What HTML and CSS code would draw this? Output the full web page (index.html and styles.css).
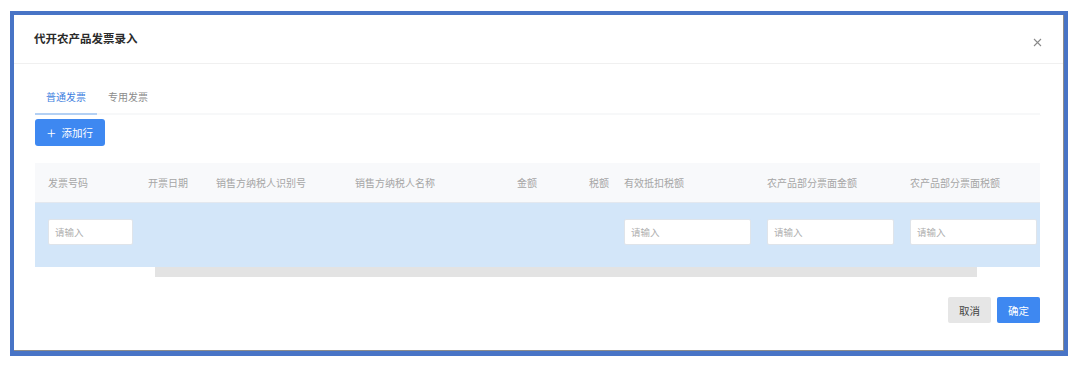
FILE: index.html
```html
<!DOCTYPE html>
<html lang="zh-CN">
<head>
<meta charset="utf-8">
<title>代开农产品发票录入</title>
<link rel="stylesheet" href="styles.css">
</head>
<body>
<div class="frame">
  <div class="dialog">
    <div class="dlg-header">
      <span class="dlg-title">代开农产品发票录入</span>
      <span class="dlg-close">
        <svg width="9" height="9" viewBox="0 0 9 9"><path d="M1 1 L8 8 M8 1 L1 8" stroke="#8a8a8a" stroke-width="1.1" fill="none"/></svg>
      </span>
    </div>
    <div class="dlg-body">
      <div class="tabs">
        <div class="tab active">普通发票</div>
        <div class="tab">专用发票</div>
      </div>
      <button class="btn-add"><span class="plus">+</span>添加行</button>
      <div class="table">
        <div class="thead">
          <div class="th">发票号码</div>
          <div class="th">开票日期</div>
          <div class="th">销售方纳税人识别号</div>
          <div class="th">销售方纳税人名称</div>
          <div class="th">金额</div>
          <div class="th">税额</div>
          <div class="th">有效抵扣税额</div>
          <div class="th">农产品部分票面金额</div>
          <div class="th">农产品部分票面税额</div>
        </div>
        <div class="trow">
          <div class="td"><div class="input narrow">请输入</div></div>
          <div class="td"></div>
          <div class="td"></div>
          <div class="td"></div>
          <div class="td"></div>
          <div class="td"></div>
          <div class="td"><div class="input">请输入</div></div>
          <div class="td"><div class="input">请输入</div></div>
          <div class="td"><div class="input">请输入</div></div>
        </div>
        <div class="scrollbar"></div>
      </div>
      <div class="dlg-footer">
        <button class="btn btn-cancel">取消</button>
        <button class="btn btn-ok">确定</button>
      </div>
    </div>
  </div>
</div>
</body>
</html>
```

FILE: styles.css
```css
* { box-sizing: border-box; }
html, body { margin: 0; padding: 0; background: #ffffff; }
body {
  font-family: "Noto Sans CJK SC", "Noto Sans", "Liberation Sans", sans-serif;
  color: #333;
}
.frame {
  margin: 11px 0 0 10px;
  width: 1058px;
  height: 345px;
  border-style: solid;
  border-color: #4874c6;
  border-width: 4px 4px 5px 4px;
  background: #fff;
}
.dialog {
  height: 100%;
  border-right: 1px solid #8c8c8c;
  border-bottom: 1px solid #8c8c8c;
  background: #fff;
}
.dlg-header {
  height: 49px;
  padding: 0 21px 0 20px;
  display: flex;
  align-items: center;
  justify-content: space-between;
  border-bottom: 1px solid #f0f0f0;
}
.dlg-title {
  font-size: 11.5px;
  font-weight: 700;
  color: #2b2b2b;
  margin-top: -2px;
}
.dlg-close {
  display: flex;
  align-items: center;
  margin-top: 7px;
}
.dlg-body {
  padding: 0 23px 0 21px;
}
.tabs {
  display: flex;
  padding-top: 17px;
  border-bottom: 2px solid #f7f8f9;
}
.tab {
  font-size: 10px;
  line-height: 32px;
  padding: 0 11px;
  color: #8c8c8c;
  margin-bottom: -2px;
  border-bottom: 2px solid transparent;
}
.tab.active {
  color: #3f7fe0;
  border-bottom-color: #b3d0f4;
}
.btn-add {
  margin-top: 4px;
  width: 70px;
  height: 27px;
  border: none;
  border-radius: 3px;
  background: #3e88f1;
  color: #fff;
  font-family: inherit;
  font-size: 10.5px;
  display: flex;
  align-items: center;
  justify-content: center;
  padding: 0;
}
.btn-add .plus {
  font-size: 16px;
  font-weight: 300;
  margin-right: 6px;
  line-height: 1;
  margin-top: -2px;
}
.table {
  margin-top: 17px;
  width: 1005px;
}
.thead, .trow {
  display: grid;
  grid-template-columns: 100px 68px 139px 162px 72px 35px 143px 143px 143px;
}
.thead {
  height: 40px;
  background: #f8f9fb;
  border-bottom: 1px solid #e3e8ef;
  align-items: center;
}
.th {
  font-size: 10px;
  color: #a6a6a6;
  padding-left: 13px;
  white-space: nowrap;
}
.trow {
  height: 64px;
  background: #d3e6f9;
  align-items: start;
}
.td {
  padding: 16px 3px 0 13px;
}
.input {
  height: 26px;
  width: 127px;
  background: #fff;
  border: 1px solid #dfe4ea;
  border-radius: 2px;
  font-size: 9.5px;
  line-height: 24px;
  color: #b0b0b0;
  padding-left: 6px;
}
.input.narrow { width: 85px; }
.scrollbar {
  margin-left: 120px;
  width: 822px;
  height: 10px;
  background: #e3e3e3;
}
.dlg-footer {
  margin-top: 20px;
  display: flex;
  justify-content: flex-end;
  gap: 6px;
}
.btn {
  width: 43px;
  height: 26px;
  border: none;
  border-radius: 2px;
  font-family: inherit;
  font-size: 10.5px;
  padding: 0;
}
.btn-cancel { background: #e6e6e6; color: #444; }
.btn-ok { background: #3e88f1; color: #fff; }
```
